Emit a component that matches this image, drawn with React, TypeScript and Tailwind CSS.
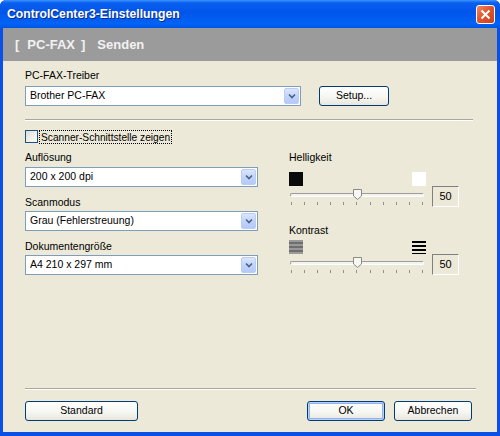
import React from 'react'

const font = { fontFamily: '"Liberation Sans", Arial, sans-serif' }

function Dropdown({ value, width }: { value: string; width: string }) {
  return (
    <div className={`${width} h-[20px] flex items-stretch bg-white border border-[#7f9db9] p-[1px]`}>
      <div className="flex-1 flex items-center pl-[3px] text-[10.5px] text-black">{value}</div>
      <div className="w-[15px] flex items-center justify-center rounded-[2px] border border-[#b9cdf6] bg-[linear-gradient(180deg,#dbe6fd_0%,#c1d4fa_50%,#b3c9f8_100%)]">
        <svg width="8" height="6" viewBox="0 0 8 6">
          <path d="M1 1.5 L4 4.5 L7 1.5" fill="none" stroke="#4d6185" strokeWidth="1.6" />
        </svg>
      </div>
    </div>
  )
}

function Button({ label, width, primary }: { label: string; width: string; primary?: boolean }) {
  return (
    <div
      className={`${width} h-[20px] rounded-[3px] border border-[#003c74] flex items-center justify-center text-[10.5px] text-black bg-[linear-gradient(180deg,#ffffff_0%,#f5f5f1_60%,#e8e6dc_100%)] ${
        primary ? 'shadow-[inset_0_0_0_1px_#b9d1fa,inset_0_0_0_2px_#8fb2f0]' : ''
      }`}
    >
      {label}
    </div>
  )
}

function Slider() {
  const ticks = Array.from({ length: 11 })
  return (
    <div className="relative h-[21px] w-[136px]">
      <div className="mt-[7px] mx-[1px] h-[4px] rounded-[2px] border-t border-l border-[#9d9d9d] border-b border-r border-b-white border-r-white bg-[#f4f3ee]" />
      <div className="absolute left-[64px] top-[3px]">
        <svg width="9" height="11" viewBox="0 0 9 11">
          <path d="M0.5 0.5 H8.5 V7 L4.5 10.5 L0.5 7 Z" fill="#f7f7f4" stroke="#8a8a82" />
        </svg>
      </div>
      <div className="mt-[5px] flex justify-between px-[2px]">
        {ticks.map((_, i) => (
          <div key={i} className="w-[1px] h-[3px] bg-[#8f8f8f]" />
        ))}
      </div>
    </div>
  )
}

function ValueBox() {
  return (
    <div className="ml-[7px] w-[27px] h-[21px] border-t border-l border-[#808080] border-b border-r border-b-white border-r-white flex items-center justify-center text-[11px] text-black">
      50
    </div>
  )
}

function ContrastIcon({ dark }: { dark?: boolean }) {
  return (
    <svg width="14" height="14" viewBox="0 0 14 14">
      {dark ? (
        <g fill="#000">
          <rect x="0" y="1" width="14" height="2" />
          <rect x="0" y="5" width="14" height="2" />
          <rect x="0" y="9" width="14" height="2" />
          <rect x="0" y="13" width="14" height="1" />
        </g>
      ) : (
        <g>
          <rect x="0" y="0" width="14" height="14" fill="#9a9a9a" />
          <rect x="0" y="2" width="14" height="2" fill="#6e6e6e" />
          <rect x="0" y="6" width="14" height="2" fill="#6e6e6e" />
          <rect x="0" y="10" width="14" height="2" fill="#6e6e6e" />
        </g>
      )}
    </svg>
  )
}

export default function App() {
  return (
    <div className="w-[500px] h-[436px] flex flex-col bg-[#0a4fe6] rounded-t-[6px] overflow-hidden" style={font}>
      {/* title bar */}
      <div className="h-[28px] flex items-center justify-between pl-[7px] pr-[5px] bg-[linear-gradient(180deg,#3d95ff_0%,#0a5fef_10%,#0055ea_45%,#0263f5_85%,#0054e3_100%)]">
        <span className="text-white font-bold text-[12.2px] [text-shadow:1px_1px_0_#0a2a8a]">
          ControlCenter3-Einstellungen
        </span>
        <div className="w-[19px] h-[19px] rounded-[3px] border border-white bg-[linear-gradient(135deg,#f08a66_0%,#e0572f_45%,#c9401b_100%)] flex items-center justify-center">
          <svg width="11" height="11" viewBox="0 0 11 11">
            <path d="M1.5 1.5 L9.5 9.5 M9.5 1.5 L1.5 9.5" stroke="#fff" strokeWidth="2" />
          </svg>
        </div>
      </div>

      {/* body */}
      <div className="flex-1 mx-[3px] mb-[4px] flex flex-col bg-[#ece9d8]">
        <div className="h-[33px] flex items-center pl-[12px] bg-[#9b9b9b] text-[#f2f2f2] font-bold text-[13px]">
          <span>[</span>
          <span className="ml-[8px]">PC-FAX</span>
          <span className="ml-[6px]">]</span>
          <span className="ml-[12px]">Senden</span>
        </div>

        <div className="flex-1 flex flex-col px-[22px] text-[10.5px] text-black">
          <div className="mt-[8px] h-[13px] leading-[13px]">PC-FAX-Treiber</div>
          <div className="mt-[4px] flex items-center">
            <Dropdown value="Brother PC-FAX" width="w-[276px]" />
            <div className="ml-[18px]">
              <Button label="Setup..." width="w-[70px]" />
            </div>
          </div>

          <div className="mt-[13px] w-[448px] h-[2px] border-t border-[#aca899] border-b border-b-white" />

          <div className="mt-[9px] h-[13px] flex items-center">
            <div className="w-[13px] h-[13px] border border-[#1c5180] bg-[linear-gradient(135deg,#dcdcd7_0%,#ffffff_100%)]" />
            <div className="ml-[1px] px-[1px] h-[14px] leading-[13px] border border-dotted border-black text-[10.2px]">
              Scanner-Schnittstelle zeigen
            </div>
          </div>

          <div className="flex">
            <div className="w-[233px] flex flex-col">
              <div className="mt-[8px] h-[13px] leading-[13px]">Auflösung</div>
              <div className="mt-[3px]">
                <Dropdown value="200 x 200 dpi" width="w-[233px]" />
              </div>
              <div className="mt-[9px] h-[13px] leading-[13px]">Scanmodus</div>
              <div className="mt-[2px]">
                <Dropdown value="Grau (Fehlerstreuung)" width="w-[233px]" />
              </div>
              <div className="mt-[9px] h-[13px] leading-[13px]">Dokumentengröße</div>
              <div className="mt-[2px]">
                <Dropdown value="A4 210 x 297 mm" width="w-[233px]" />
              </div>
            </div>

            <div className="ml-[31px] flex flex-col">
              <div className="mt-[8px] h-[13px] leading-[13px]">Helligkeit</div>
              <div className="mt-[8px] flex items-end">
                <div className="flex flex-col">
                  <div className="h-[14px] flex justify-between">
                    <div className="w-[14px] h-[14px] bg-[#0a0a0a]" />
                    <div className="w-[14px] h-[14px] bg-white mr-[-1px]" />
                  </div>
                  <Slider />
                </div>
                <ValueBox />
              </div>

              <div className="mt-[17px] h-[13px] leading-[13px]">Kontrast</div>
              <div className="mt-[3px] flex items-end">
                <div className="flex flex-col">
                  <div className="h-[14px] flex justify-between">
                    <ContrastIcon />
                    <div className="mr-[-1px]">
                      <ContrastIcon dark />
                    </div>
                  </div>
                  <Slider />
                </div>
                <ValueBox />
              </div>
            </div>
          </div>

          <div className="flex-1" />
          <div className="w-[451px] h-[2px] border-t border-[#aca899] border-b border-b-white" />
          <div className="mt-[11px] mb-[11px] flex items-center">
            <Button label="Standard" width="w-[113px]" />
            <div className="flex-1" />
            <Button label="OK" width="w-[78px]" primary />
            <div className="ml-[9px] mr-[3px]">
              <Button label="Abbrechen" width="w-[78px]" />
            </div>
          </div>
        </div>
      </div>
    </div>
  )
}
